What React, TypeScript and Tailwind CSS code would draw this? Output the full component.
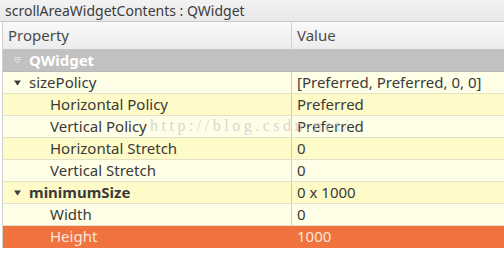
import React from "react";

type Row = {
  name: string;
  value?: string;
  level: 0 | 1;
  tone: "light" | "dark" | "selected";
  bold?: boolean;
  expander?: boolean;
};

const ROWS: Row[] = [
  { name: "sizePolicy", value: "[Preferred, Preferred, 0, 0]", level: 0, tone: "light", expander: true },
  { name: "Horizontal Policy", value: "Preferred", level: 1, tone: "dark" },
  { name: "Vertical Policy", value: "Preferred", level: 1, tone: "light" },
  { name: "Horizontal Stretch", value: "0", level: 1, tone: "dark" },
  { name: "Vertical Stretch", value: "0", level: 1, tone: "light" },
  { name: "minimumSize", value: "0 x 1000", level: 0, tone: "dark", bold: true, expander: true },
  { name: "Width", value: "0", level: 1, tone: "light" },
  { name: "Height", value: "1000", level: 1, tone: "selected" },
];

const toneClass: Record<Row["tone"], string> = {
  light: "bg-[#fffee6] border-[#e4e1c9] text-[#3a3a3a]",
  dark: "bg-[#fefbc8] border-[#e4e1c9] text-[#3a3a3a]",
  selected: "bg-[#f0723f] border-[#f0723f] text-[#fde6da]",
};

function Caret({ className }: { className?: string }) {
  return (
    <svg viewBox="0 0 7 6" className={className} width="7" height="6">
      <polygon points="0,0.5 7,0.5 3.5,5.5" fill="currentColor" />
    </svg>
  );
}

function GroupCaret() {
  return (
    <svg viewBox="0 0 7 7" width="7" height="7" className="text-[#e6e6e6]">
      <line x1="0" y1="0.5" x2="7" y2="0.5" stroke="currentColor" strokeWidth="1" />
      <polygon points="0.8,2.5 6.2,2.5 3.5,6.3" fill="none" stroke="currentColor" strokeWidth="0.9" />
    </svg>
  );
}

function PropertyRow({ row }: { row: Row }) {
  return (
    <div className={`flex h-[22px] border-b ${toneClass[row.tone]}`}>
      <div
        className={`flex w-[289px] items-center border-r ${
          row.tone === "selected" ? "border-[#f0723f]" : "border-[#cfccb8]"
        }`}
      >
        {row.level === 0 ? (
          <>
            <span className="ml-[11px] flex w-[15px] items-center text-[#3a3a3a]">
              {row.expander && <Caret />}
            </span>
            <span className={row.bold ? "font-bold" : ""}>{row.name}</span>
          </>
        ) : (
          <span className="ml-[47px]">{row.name}</span>
        )}
      </div>
      <div className="flex flex-1 items-center pl-[5px]">{row.value}</div>
    </div>
  );
}

export default function App() {
  return (
    <div
      className="relative h-[253px] w-[504px] overflow-hidden bg-white text-[15px] leading-none"
      style={{ fontFamily: '"Noto Sans", "Open Sans", sans-serif' }}
    >
      {/* panel title */}
      <div className="flex h-[22px] items-center border-b border-[#c9c9c9] bg-gradient-to-b from-[#f3f3f3] to-[#e8e8e8] pl-[5px] text-[14px] text-[#3c3c3c]">
        scrollAreaWidgetContents : QWidget
      </div>

      <div className="ml-[2px] border-l border-[#d0d0d0]">
        {/* header */}
        <div className="flex h-[28px] border-b border-[#c4c4c4] bg-gradient-to-b from-[#fafafa] to-[#ececec] text-[#4a4a4a]">
          <div className="flex w-[289px] items-center border-r border-[#d2d2d2] pl-[5px]">Property</div>
          <div className="flex flex-1 items-center pl-[5px]">Value</div>
        </div>

        {/* group row */}
        <div className="flex h-[22px] items-center border-b border-[#b8b8b8] bg-[#c1c1c1] font-bold text-white">
          <span className="ml-[11px] flex w-[15px] items-center">
            <GroupCaret />
          </span>
          QWidget
        </div>

        {ROWS.map((r) => (
          <PropertyRow key={r.name} row={r} />
        ))}
      </div>

      {/* blog watermark */}
      <div
        className="pointer-events-none absolute left-[150px] top-[118px] text-[16px] tracking-[3.5px] text-[#cbcbcb]/80"
        style={{ fontFamily: '"Liberation Serif", serif' }}
      >
        http://blog.csdn.net/
      </div>
    </div>
  );
}
